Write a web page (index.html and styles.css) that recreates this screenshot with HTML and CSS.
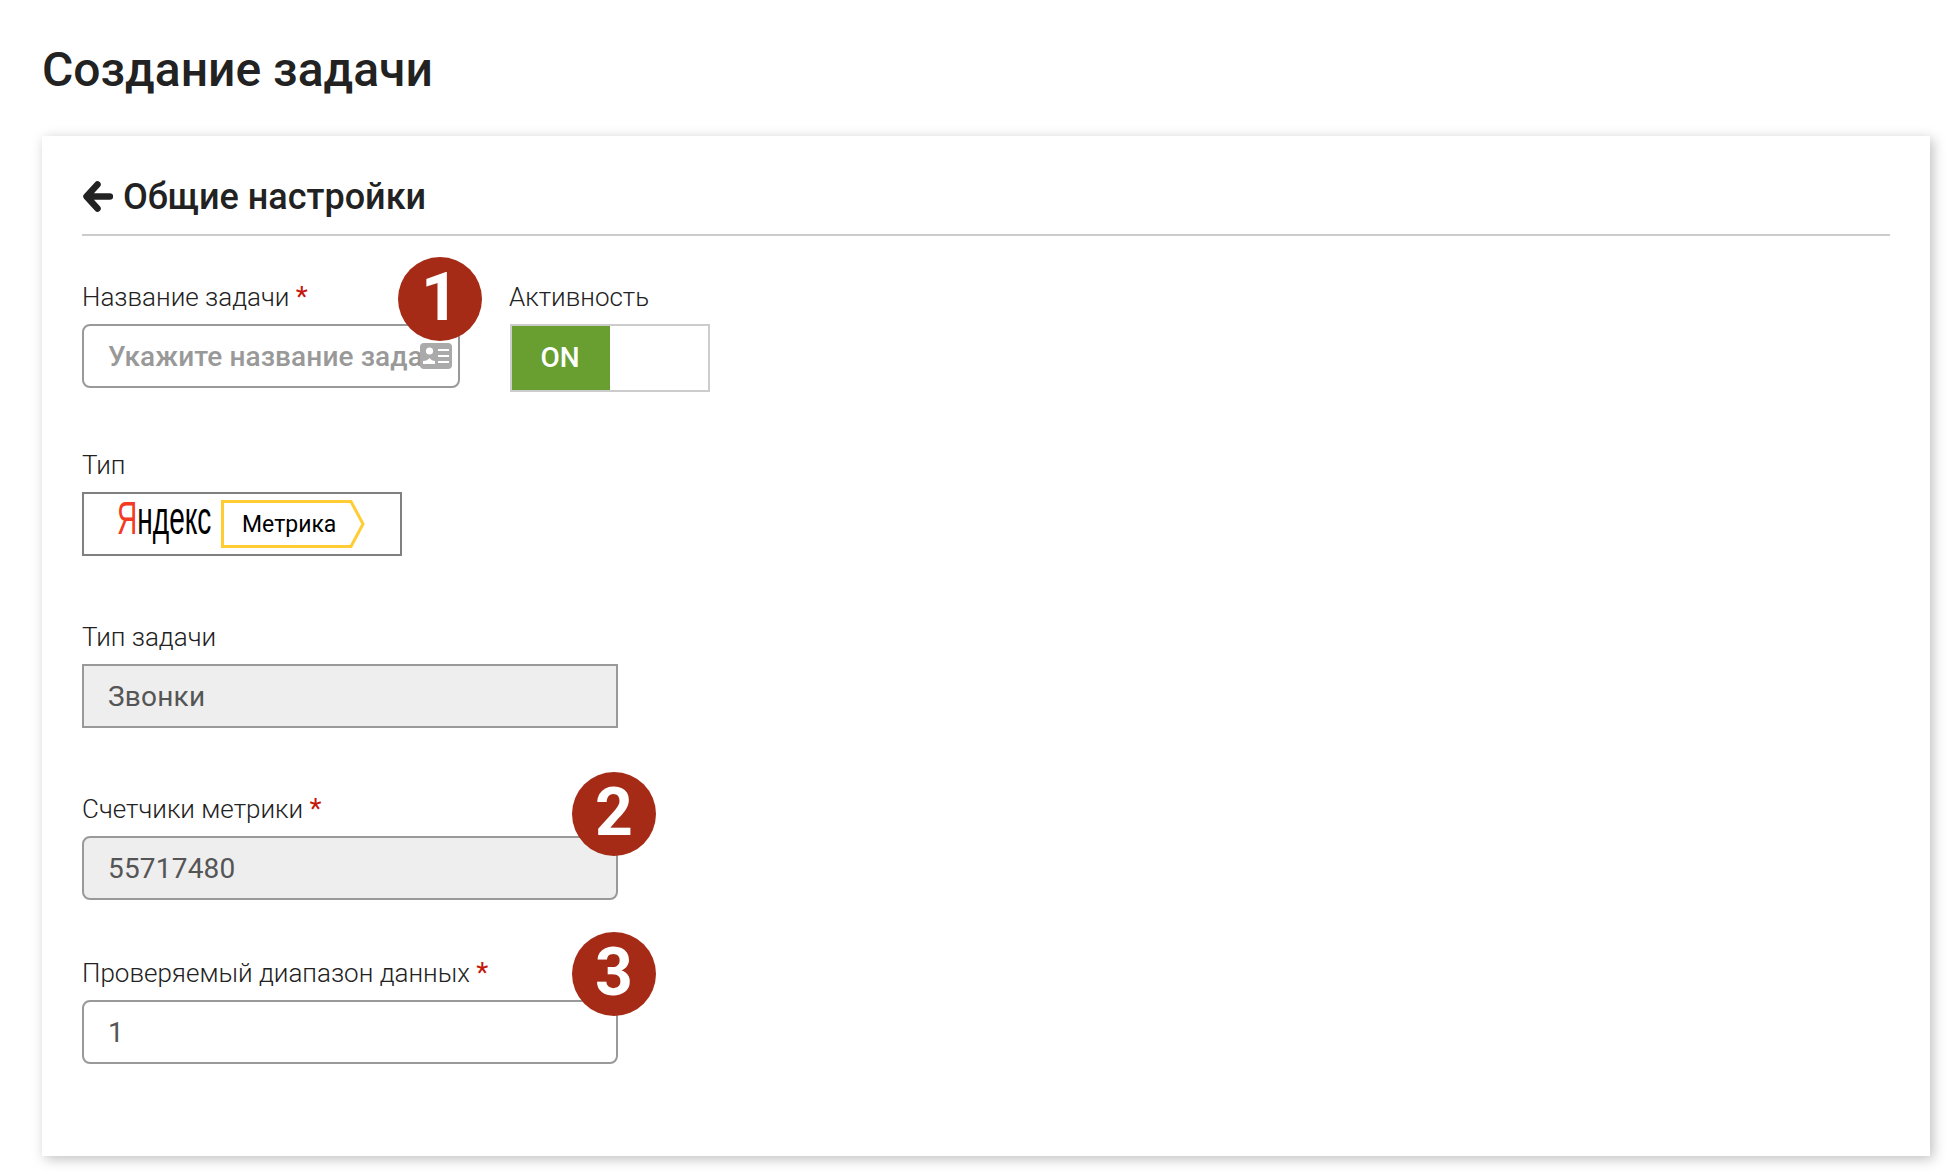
FILE: index.html
```html
<!DOCTYPE html>
<html lang="ru">
<head>
<meta charset="utf-8">
<title>Создание задачи</title>
<link rel="stylesheet" href="styles.css">
</head>
<body>
<main class="page">
  <h1 class="page-title">Создание задачи</h1>
  <section class="card">
    <header class="section-head">
      <svg class="back-arrow" viewBox="0 0 30 31" aria-hidden="true">
        <path d="M14.500 3.500 3.500 15.500 14.500 27.500M4 15.500H27" fill="none" stroke="#222" stroke-width="6.500" stroke-linecap="round" stroke-linejoin="round"/>
      </svg>
      <h2 class="section-title">Общие настройки</h2>
    </header>

    <div class="row row-first">
      <div class="field field-name">
        <label class="label">Название задачи <span class="req">*</span></label>
        <div class="control-wrap">
          <input class="input" type="text" placeholder="Укажите название задачи">
          <svg class="input-icon" viewBox="0 0 32 26" aria-hidden="true">
            <rect width="32" height="26" rx="4" fill="#aaa"/>
            <circle cx="9.500" cy="8" r="3.600" fill="#fff"/>
            <path d="M3 21v-3c3 0 5-1 6.500-3 1.500 2 3.500 3 5.500 3v3z" fill="#fff"/>
            <path d="M18 7h11M18 13h11M18 19h11" stroke="#fff" stroke-width="2.200"/>
          </svg>
        </div>
        <span class="badge badge-one">1</span>
      </div>
      <div class="field field-active">
        <label class="label">Активность</label>
        <div class="toggle"><span class="toggle-on">ON</span><span class="toggle-off"></span></div>
      </div>
    </div>

    <div class="row row-type">
      <div class="field">
        <label class="label">Тип</label>
        <div class="type-box">
          <span class="logo-word"><span class="logo-text"><span class="logo-red">Я</span>ндекс</span></span>
          <span class="logo-tag">
            <svg class="logo-tag-shape" viewBox="0 0 144 48" aria-hidden="true">
              <path d="M1.500 1.500H130L142 24 130 46.500H1.500Z" fill="none" stroke="#fc3" stroke-width="3"/>
            </svg>
            <span class="logo-tag-text">Метрика</span>
          </span>
        </div>
      </div>
    </div>

    <div class="row row-task">
      <div class="field field-wide">
        <label class="label">Тип задачи</label>
        <div class="input input-static input-square">Звонки</div>
      </div>
    </div>

    <div class="row row-counter">
      <div class="field field-wide">
        <label class="label">Счетчики метрики <span class="req">*</span></label>
        <div class="input input-static">55717480</div>
        <span class="badge badge-two">2</span>
      </div>
    </div>

    <div class="row">
      <div class="field field-wide">
        <label class="label">Проверяемый диапазон данных <span class="req">*</span></label>
        <input class="input" type="text" value="1">
        <span class="badge badge-three">3</span>
      </div>
    </div>
  </section>
</main>
</body>
</html>
```

FILE: styles.css
```css
* { box-sizing: border-box; }
html, body { margin: 0; padding: 0; background: #fff; }
body { font-family: Roboto, "Liberation Sans", sans-serif; color: #222; }

.page { padding: 0 20px 18px 42px; width: 1950px; height: 1174px; overflow: hidden; }
.page-title {
  margin: 0;
  height: 136px;
  padding-top: 40px;
  font-size: 48px;
  line-height: 60px;
  font-weight: 500;
  color: #222;
}

.card {
  height: 1020px;
  padding: 0 40px;
  background: #fff;
  box-shadow: 3px 3px 12px rgba(0, 0, 0, .25);
}

.section-head {
  display: flex;
  align-items: center;
  height: 100px;
  padding-top: 23px;
  border-bottom: 2px solid #ccc;
}
.back-arrow { width: 30px; height: 31px; margin-left: 1px; margin-right: 10px; flex: none; }
.section-title { margin: 0; font-size: 36px; line-height: 46px; font-weight: 500; color: #222; }

.row { display: flex; }
.row-first { margin-top: 46px; margin-bottom: 58px; }
.row-type { margin-bottom: 66px; }
.row-task { margin-bottom: 66px; }
.row-counter { margin-bottom: 58px; }

.field { position: relative; display: flex; flex-direction: column; }
.field-name { width: 378px; }
.field-active { margin-left: 49px; }
.field-wide { width: 536px; }

.label {
  display: block;
  height: 42px;
  font-size: 26px;
  line-height: 30px;
  font-weight: 300;
  color: #222;
}
.req { color: #c5170c; font-weight: 400; font-size: 28px; line-height: 24px; }

.control-wrap { position: relative; }
.input {
  display: block;
  width: 100%;
  height: 64px;
  margin: 0;
  padding: 0 32px 0 24px;
  border: 2px solid #999;
  border-radius: 8px;
  background: #fff;
  font: 400 28px/60px Roboto, "Liberation Sans", sans-serif;
  color: #555;
  outline: none;
  letter-spacing: .1px;
}
.input::placeholder { color: #999; opacity: 1; font-weight: 500; }
.input-static { background: #eee; line-height: 62px; letter-spacing: .2px; }
.input-square { border-radius: 0; }

.input-icon { position: absolute; top: 19px; right: 8px; width: 32px; height: 26px; }

.toggle {
  display: flex;
  width: 200px;
  height: 68px;
  margin-left: 1px;
  border: 2px solid #ccc;
}
.toggle-on {
  width: 98px;
  padding-right: 2px;
  background: #689f30;
  color: #fff;
  font-size: 28px;
  font-weight: 500;
  line-height: 64px;
  text-align: center;
}
.toggle-off { flex: 1; background: #fff; }

.type-box {
  display: flex;
  align-items: center;
  width: 320px;
  height: 64px;
  padding-left: 33px;
  border: 2px solid #808080;
  background: #fff;
}
.logo-word { display: block; width: 94px; height: 52px; margin-right: 10px; flex: none; }
.logo-text {
  display: block;
  margin-top: -6px;
  font-family: "Liberation Sans", Arial, sans-serif;
  font-size: 46px;
  line-height: 52px;
  color: #000;
  white-space: nowrap;
  transform: scaleX(.61);
  transform-origin: left center;
}
.logo-red { color: #f33a22; }
.logo-tag {
  position: relative;
  display: block;
  width: 144px;
  height: 48px;
  flex: none;
  padding-left: 21px;
  font-size: 23px;
  line-height: 50px;
  color: #000;
}
.logo-tag-shape { position: absolute; top: 0; left: 0; width: 144px; height: 48px; }
.logo-tag-text { position: relative; }

.badge {
  position: absolute;
  width: 84px;
  height: 84px;
  border-radius: 50%;
  background: #a52b16;
  color: #fff;
  font-family: Roboto, "Liberation Sans", sans-serif;
  font-size: 66px;
  font-weight: 700;
  line-height: 82px;
  text-align: center;
}
.badge-one { top: -25px; right: -22px; }
.badge-two { top: -22px; right: -38px; }
.badge-three { top: -26px; right: -38px; }
```
